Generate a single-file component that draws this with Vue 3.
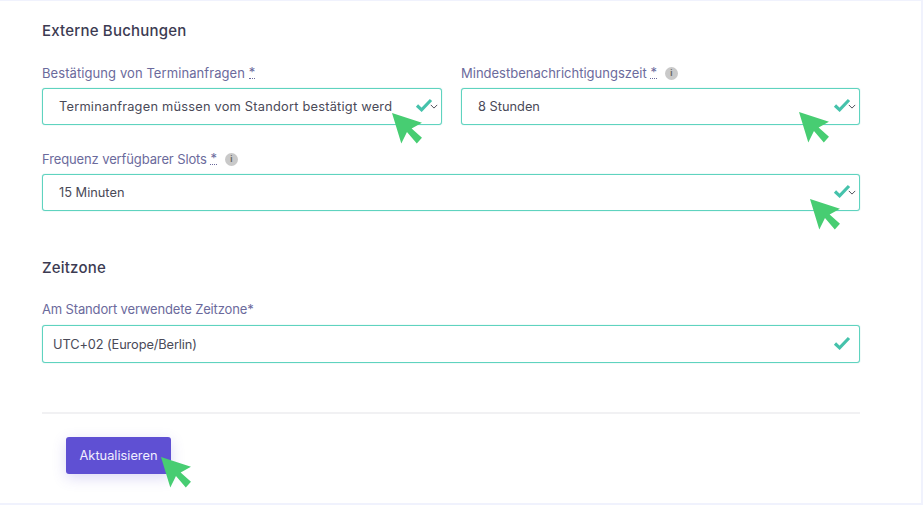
<script setup>
const arrow = '0,0 29,9.5 19,15 29,24 24,29.5 14.5,18.5 9,29.5'
</script>

<template>
  <main class="card">
    <h2 class="title">Externe Buchungen</h2>
    <div class="grid">
      <div class="field">
        <label class="label">Bestätigung von Terminanfragen <abbr>*</abbr></label>
        <div class="box select">
          <span class="value long">Terminanfragen müssen vom Standort bestätigt werd</span>
          <svg class="check" viewBox="0 0 18 14"><path d="M2 7.5l4.6 4.3L16 2" /></svg>
          <svg class="chev" viewBox="0 0 10 6"><path d="M1 1l4 4 4-4" /></svg>
          <svg class="cursor" viewBox="0 0 30 30"><polygon :points="arrow" /></svg>
        </div>
      </div>
      <div class="field">
        <label class="label tight">Mindestbenachrichtigungszeit <abbr>*</abbr><span class="info">i</span></label>
        <div class="box select">
          <span class="value">8 Stunden</span>
          <svg class="check" viewBox="0 0 18 14"><path d="M2 7.5l4.6 4.3L16 2" /></svg>
          <svg class="chev" viewBox="0 0 10 6"><path d="M1 1l4 4 4-4" /></svg>
          <svg class="cursor c2" viewBox="0 0 30 30"><polygon :points="arrow" /></svg>
        </div>
      </div>
      <div class="field wide">
        <label class="label tighter">Frequenz verfügbarer Slots <abbr>*</abbr><span class="info">i</span></label>
        <div class="box select">
          <span class="value">15 Minuten</span>
          <svg class="check" viewBox="0 0 18 14"><path d="M2 7.5l4.6 4.3L16 2" /></svg>
          <svg class="chev" viewBox="0 0 10 6"><path d="M1 1l4 4 4-4" /></svg>
          <svg class="cursor c3" viewBox="0 0 30 30"><polygon :points="arrow" /></svg>
        </div>
      </div>
    </div>

    <h2 class="title zone">Zeitzone</h2>
    <label class="label plain">Am Standort verwendete Zeitzone*</label>
    <div class="box input">
      <span class="value utc">UTC+02 (Europe/Berlin)</span>
      <svg class="check solo" viewBox="0 0 18 14"><path d="M2 7.5l4.6 4.3L16 2" /></svg>
    </div>

    <hr class="rule" />

    <button class="btn" type="button">
      Aktualisieren
      <svg class="cursor c4" viewBox="0 0 30 30"><polygon :points="arrow" /></svg>
    </button>
  </main>
</template>

<style>
html, body { background: #f0f2fd; }
</style>

<style scoped>
.card {
  box-sizing: border-box;
  width: 921px;
  height: 502px;
  margin-top: 1px;
  padding: 21px 61px 0 42px;
  background: #fff;
  font-family: Inter, "Open Sans", sans-serif;
}
.title {
  margin: 0;
  font-size: 15px;
  line-height: 18px;
  font-weight: 500;
  letter-spacing: 0.2px;
  color: #3c3b52;
}
.grid {
  display: grid;
  grid-template-columns: 400px 399px;
  column-gap: 19px;
  row-gap: 25px;
  margin-top: 24px;
}
.wide { grid-column: 1 / 3; }
.label {
  display: flex;
  align-items: center;
  height: 18px;
  font-size: 13px;
  line-height: 18px;
  letter-spacing: 0.08px;
  color: #6b6a9c;
  white-space: pre;
}
.label.tight { letter-spacing: 0; }
.label.tighter { letter-spacing: -0.12px; }
abbr {
  margin-left: 0;
  border-bottom: 1px dotted #6b6a9c;
  line-height: 11px;
  height: 11px;
}
.info {
  width: 13px;
  height: 13px;
  margin-left: 8px;
  border-radius: 50%;
  background: #c9c9c9;
  color: #666;
  font-size: 8px;
  font-weight: 700;
  line-height: 13px;
  text-align: center;
}
.box {
  box-sizing: border-box;
  position: relative;
  display: flex;
  align-items: center;
  border: 1px solid #5fd3bf;
  border-radius: 3px;
  background: #fff;
  box-shadow: 0 0 1px rgba(95, 211, 191, 0.9);
}
.select {
  height: 37px;
  margin-top: 6px;
  padding-left: 16px;
}
.input {
  height: 38px;
  margin-top: 7px;
  width: 818px;
  padding-left: 10px;
}
.value {
  font-size: 12.8px;
  color: #4a4a58;
  white-space: nowrap;
}
.value.long { letter-spacing: 0.23px; }
.value.utc { letter-spacing: -0.1px; }
.check {
  position: absolute;
  right: 8px;
  top: 9px;
  width: 18px;
  height: 14px;
  fill: none;
  stroke: #45c2ab;
  stroke-width: 3.2;
}
.check.solo { right: 8px; top: 10px; }
.chev {
  position: absolute;
  right: 3px;
  top: 15px;
  width: 8px;
  height: 5px;
  fill: none;
  stroke: #4a4a55;
  stroke-width: 1.2;
}
.cursor {
  position: absolute;
  left: 349px;
  top: 24px;
  width: 31px;
  height: 31px;
  fill: #47cd72;
  overflow: visible;
}
.c2 { left: 337px; top: 23px; }
.c3 { left: 767px; top: 24px; }
.c4 { left: 95px; top: 20px; }
.zone { margin-top: 48px; }
.plain {
  margin-top: 23px;
  letter-spacing: -0.15px;
}
.rule {
  width: 818px;
  height: 2px;
  margin: 49px 0 0;
  border: 0;
  background: #f1f1f3;
}
.btn {
  position: relative;
  display: block;
  box-sizing: border-box;
  width: 105px;
  height: 37px;
  margin: 23px 0 0 24px;
  padding: 0;
  border: 0;
  border-radius: 3px;
  background: #5f50d3;
  box-shadow: 0 4px 14px rgba(95, 80, 211, 0.22);
  color: #f1efff;
  font-family: inherit;
  font-size: 12.8px;
  text-align: center;
}
</style>
